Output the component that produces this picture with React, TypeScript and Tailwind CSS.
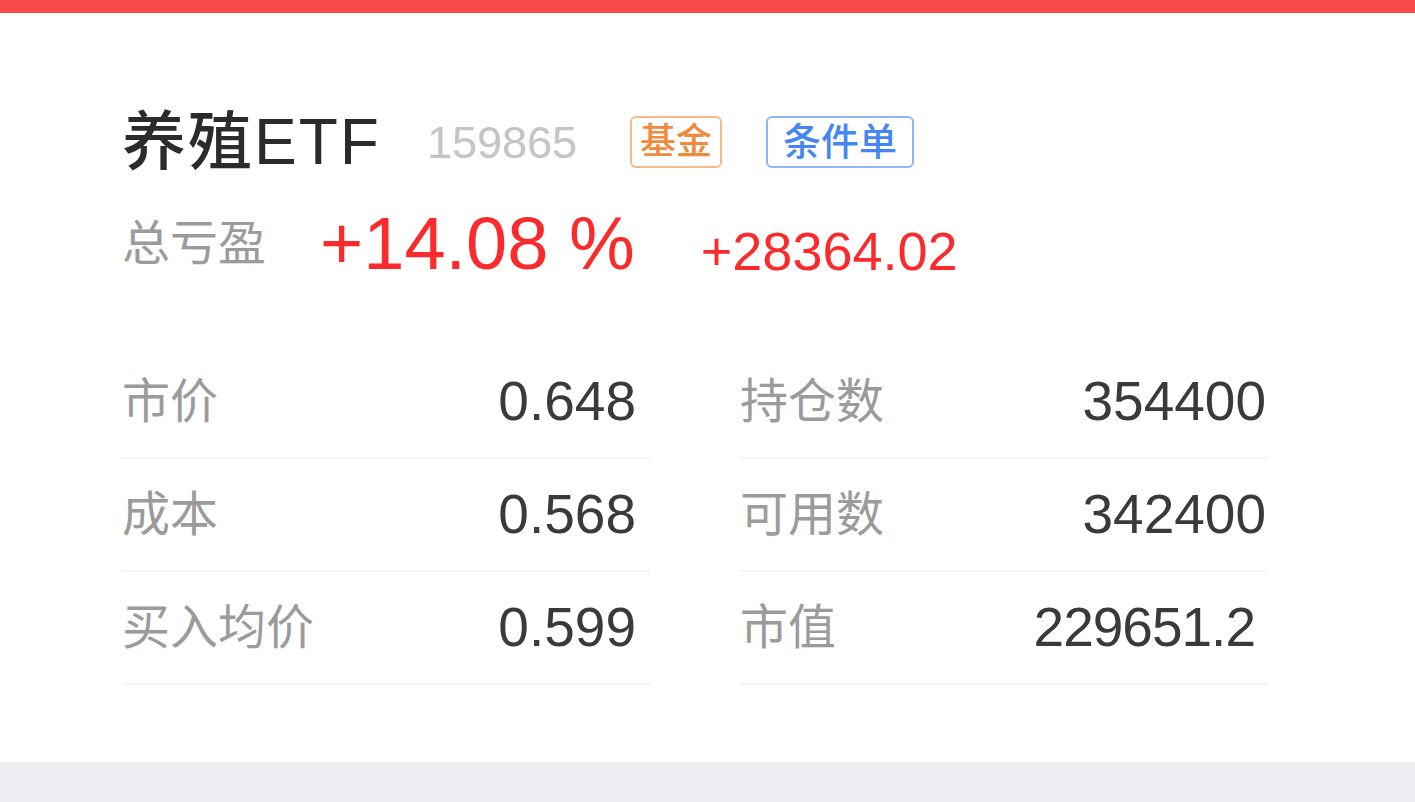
import React from "react";

type Cell = { label: string; value: string; valueClass?: string };

const left: Cell[] = [
  { label: "市价", value: "0.648", valueClass: "pr-[14px]" },
  { label: "成本", value: "0.568", valueClass: "pr-[14px]" },
  { label: "买入均价", value: "0.599", valueClass: "pr-[14px]" },
];

const right: Cell[] = [
  { label: "持仓数", value: "354400", valueClass: "pr-[2px]" },
  { label: "可用数", value: "342400", valueClass: "pr-[2px]" },
  { label: "市值", value: "229651.2", valueClass: "pr-[13px] tracking-[-1px]" },
];

const font = {
  fontFamily:
    '"Liberation Sans", "Noto Sans CJK SC", sans-serif',
};

const Column: React.FC<{ rows: Cell[] }> = ({ rows }) => (
  <div className="flex flex-col w-[528px]">
    {rows.map((r) => (
      <div
        key={r.label}
        className="h-[113px] flex items-center justify-between border-b-2 border-[#f4f4f4]"
      >
        <span className="text-[48px] text-[#9b9b9b] leading-none">{r.label}</span>
        <span
          className={`text-[55px] text-[#3a3a3a] leading-none ${r.valueClass ?? ""}`}
        >
          {r.value}
        </span>
      </div>
    ))}
  </div>
);

const App: React.FC = () => {
  return (
    <div className="w-full h-[802px] bg-[#efeef3] flex flex-col" style={font}>
      <div className="h-[13px] bg-[#f84a48] shrink-0" />
      <div className="h-[749px] bg-white shrink-0 px-[122px] pt-[94px]">
        <div className="h-[70px] flex items-center">
          <span className="text-[64px] font-medium text-[#2b2b2b] leading-none tracking-[2px]">
            养殖ETF
          </span>
          <span className="ml-[46px] text-[45px] text-[#c4c4c4] leading-none">
            159865
          </span>
          <span className="ml-[53px] w-[92px] h-[52px] flex items-center justify-center border-2 border-[#f6b98a] rounded-[6px] text-[36px] font-medium text-[#f08a3c] leading-none">
            基金
          </span>
          <span className="ml-[44px] w-[148px] h-[52px] flex items-center justify-center border-2 border-[#8fb6f7] rounded-[6px] text-[38px] font-medium text-[#4686f2] leading-none">
            条件单
          </span>
        </div>
        <div className="h-[70px] mt-[32px] flex items-center">
          <span className="text-[48px] text-[#9b9b9b] leading-none">总亏盈</span>
          <span className="ml-[54px] text-[74px] text-[#fb2a2c] leading-none">
            +14.08 %
          </span>
          <span className="ml-[66px] mt-[14px] text-[54px] text-[#fb2a2c] leading-none">
            +28364.02
          </span>
        </div>
        <div className="mt-[67px] flex gap-[90px]">
          <Column rows={left} />
          <Column rows={right} />
        </div>
      </div>
    </div>
  );
};

export default App;
